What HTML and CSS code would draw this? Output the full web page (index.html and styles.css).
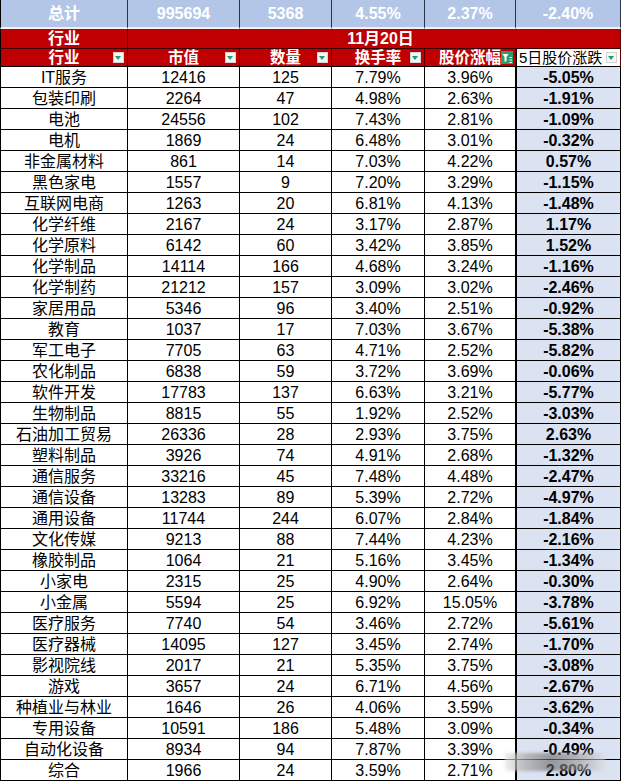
FILE: index.html
```html
<!DOCTYPE html>
<html lang="zh-CN">
<head>
<meta charset="utf-8">
<title>行业 11月20日</title>
<link rel="stylesheet" href="styles.css">
</head>
<body>
<div class="sheet">
  <div class="row total">
    <div class="cell">总计</div><div class="cell">995694</div><div class="cell">5368</div><div class="cell">4.55%</div><div class="cell">2.37%</div><div class="cell">-2.40%</div>
  </div>
  <div class="row head1">
    <div class="cell">行业</div><div class="cell date">11月20日</div>
  </div>
  <div class="row head2">
    <div class="cell">行业<span class="dd"></span></div>
    <div class="cell">市值<span class="dd"></span></div>
    <div class="cell">数量<span class="dd"></span></div>
    <div class="cell">换手率<span class="dd"></span></div>
    <div class="cell">股价涨幅<span class="ddf"><svg width="12" height="13" viewBox="0 0 12 13"><path d="M1.5 3h6L5.5 6v4.5H3.5V6z" fill="#fff"/><path d="M8.5 6.5h2.5M8.5 9h2.5M8.5 11.5h2.5" stroke="#fff" stroke-width="1.2"/></svg></span></div>
    <div class="cell plain">5日股价涨跌<span class="dd"></span></div>
  </div>
  <div class="row"><div class="cell">IT服务</div><div class="cell">12416</div><div class="cell">125</div><div class="cell">7.79%</div><div class="cell">3.96%</div><div class="cell chg">-5.05%</div></div>
  <div class="row"><div class="cell">包装印刷</div><div class="cell">2264</div><div class="cell">47</div><div class="cell">4.98%</div><div class="cell">2.63%</div><div class="cell chg">-1.91%</div></div>
  <div class="row"><div class="cell">电池</div><div class="cell">24556</div><div class="cell">102</div><div class="cell">7.43%</div><div class="cell">2.81%</div><div class="cell chg">-1.09%</div></div>
  <div class="row"><div class="cell">电机</div><div class="cell">1869</div><div class="cell">24</div><div class="cell">6.48%</div><div class="cell">3.01%</div><div class="cell chg">-0.32%</div></div>
  <div class="row"><div class="cell">非金属材料</div><div class="cell">861</div><div class="cell">14</div><div class="cell">7.03%</div><div class="cell">4.22%</div><div class="cell chg">0.57%</div></div>
  <div class="row"><div class="cell">黑色家电</div><div class="cell">1557</div><div class="cell">9</div><div class="cell">7.20%</div><div class="cell">3.29%</div><div class="cell chg">-1.15%</div></div>
  <div class="row"><div class="cell">互联网电商</div><div class="cell">1263</div><div class="cell">20</div><div class="cell">6.81%</div><div class="cell">4.13%</div><div class="cell chg">-1.48%</div></div>
  <div class="row"><div class="cell">化学纤维</div><div class="cell">2167</div><div class="cell">24</div><div class="cell">3.17%</div><div class="cell">2.87%</div><div class="cell chg">1.17%</div></div>
  <div class="row"><div class="cell">化学原料</div><div class="cell">6142</div><div class="cell">60</div><div class="cell">3.42%</div><div class="cell">3.85%</div><div class="cell chg">1.52%</div></div>
  <div class="row"><div class="cell">化学制品</div><div class="cell">14114</div><div class="cell">166</div><div class="cell">4.68%</div><div class="cell">3.24%</div><div class="cell chg">-1.16%</div></div>
  <div class="row"><div class="cell">化学制药</div><div class="cell">21212</div><div class="cell">157</div><div class="cell">3.09%</div><div class="cell">3.02%</div><div class="cell chg">-2.46%</div></div>
  <div class="row"><div class="cell">家居用品</div><div class="cell">5346</div><div class="cell">96</div><div class="cell">3.40%</div><div class="cell">2.51%</div><div class="cell chg">-0.92%</div></div>
  <div class="row"><div class="cell">教育</div><div class="cell">1037</div><div class="cell">17</div><div class="cell">7.03%</div><div class="cell">3.67%</div><div class="cell chg">-5.38%</div></div>
  <div class="row"><div class="cell">军工电子</div><div class="cell">7705</div><div class="cell">63</div><div class="cell">4.71%</div><div class="cell">2.52%</div><div class="cell chg">-5.82%</div></div>
  <div class="row"><div class="cell">农化制品</div><div class="cell">6838</div><div class="cell">59</div><div class="cell">3.72%</div><div class="cell">3.69%</div><div class="cell chg">-0.06%</div></div>
  <div class="row"><div class="cell">软件开发</div><div class="cell">17783</div><div class="cell">137</div><div class="cell">6.63%</div><div class="cell">3.21%</div><div class="cell chg">-5.77%</div></div>
  <div class="row"><div class="cell">生物制品</div><div class="cell">8815</div><div class="cell">55</div><div class="cell">1.92%</div><div class="cell">2.52%</div><div class="cell chg">-3.03%</div></div>
  <div class="row"><div class="cell">石油加工贸易</div><div class="cell">26336</div><div class="cell">28</div><div class="cell">2.93%</div><div class="cell">3.75%</div><div class="cell chg">2.63%</div></div>
  <div class="row"><div class="cell">塑料制品</div><div class="cell">3926</div><div class="cell">74</div><div class="cell">4.91%</div><div class="cell">2.68%</div><div class="cell chg">-1.32%</div></div>
  <div class="row"><div class="cell">通信服务</div><div class="cell">33216</div><div class="cell">45</div><div class="cell">7.48%</div><div class="cell">4.48%</div><div class="cell chg">-2.47%</div></div>
  <div class="row"><div class="cell">通信设备</div><div class="cell">13283</div><div class="cell">89</div><div class="cell">5.39%</div><div class="cell">2.72%</div><div class="cell chg">-4.97%</div></div>
  <div class="row"><div class="cell">通用设备</div><div class="cell">11744</div><div class="cell">244</div><div class="cell">6.07%</div><div class="cell">2.84%</div><div class="cell chg">-1.84%</div></div>
  <div class="row"><div class="cell">文化传媒</div><div class="cell">9213</div><div class="cell">88</div><div class="cell">7.44%</div><div class="cell">4.23%</div><div class="cell chg">-2.16%</div></div>
  <div class="row"><div class="cell">橡胶制品</div><div class="cell">1064</div><div class="cell">21</div><div class="cell">5.16%</div><div class="cell">3.45%</div><div class="cell chg">-1.34%</div></div>
  <div class="row"><div class="cell">小家电</div><div class="cell">2315</div><div class="cell">25</div><div class="cell">4.90%</div><div class="cell">2.64%</div><div class="cell chg">-0.30%</div></div>
  <div class="row"><div class="cell">小金属</div><div class="cell">5594</div><div class="cell">25</div><div class="cell">6.92%</div><div class="cell">15.05%</div><div class="cell chg">-3.78%</div></div>
  <div class="row"><div class="cell">医疗服务</div><div class="cell">7740</div><div class="cell">54</div><div class="cell">3.46%</div><div class="cell">2.72%</div><div class="cell chg">-5.61%</div></div>
  <div class="row"><div class="cell">医疗器械</div><div class="cell">14095</div><div class="cell">127</div><div class="cell">3.45%</div><div class="cell">2.74%</div><div class="cell chg">-1.70%</div></div>
  <div class="row"><div class="cell">影视院线</div><div class="cell">2017</div><div class="cell">21</div><div class="cell">5.35%</div><div class="cell">3.75%</div><div class="cell chg">-3.08%</div></div>
  <div class="row"><div class="cell">游戏</div><div class="cell">3657</div><div class="cell">24</div><div class="cell">6.71%</div><div class="cell">4.56%</div><div class="cell chg">-2.67%</div></div>
  <div class="row"><div class="cell">种植业与林业</div><div class="cell">1646</div><div class="cell">26</div><div class="cell">4.06%</div><div class="cell">3.59%</div><div class="cell chg">-3.62%</div></div>
  <div class="row"><div class="cell">专用设备</div><div class="cell">10591</div><div class="cell">186</div><div class="cell">5.48%</div><div class="cell">3.09%</div><div class="cell chg">-0.34%</div></div>
  <div class="row"><div class="cell">自动化设备</div><div class="cell">8934</div><div class="cell">94</div><div class="cell">7.87%</div><div class="cell">3.39%</div><div class="cell chg">-0.49%</div></div>
  <div class="row"><div class="cell">综合</div><div class="cell">1966</div><div class="cell">24</div><div class="cell">3.59%</div><div class="cell">2.71%</div><div class="cell chg">2.80%</div></div>
  <div class="watermark"></div>
</div>
</body>
</html>
```
FILE: styles.css
```css
html, body {
  margin: 0;
  padding: 0;
  background: #ffffff;
}
.sheet {
  position: relative;
  width: 621px;
  font-family: "Liberation Sans", "Noto Sans CJK SC", sans-serif;
  font-size: 16px;
  line-height: 1;
  color: #000;
}
.row {
  display: grid;
  grid-template-columns: 128px 112px 92px 93px 91px 105px;
  height: 21px;
}
.cell {
  box-sizing: border-box;
  display: flex;
  align-items: center;
  justify-content: center;
  border-right: 1px solid #000;
  border-bottom: 1px solid #000;
  white-space: nowrap;
  overflow: hidden;
  position: relative;
  padding-top: 1px;
}
.cell:first-child {
  border-left: 1px solid #000;
}
.chg {
  background: #dbe2f1;
  font-weight: bold;
  border-left: 1px solid #000;
}
.total {
  height: 29px;
}
.total .cell {
  background: #b4c6e7;
  color: #fff;
  font-weight: bold;
  border-bottom: 2px solid #f2f2f2;
  border-right-color: #2c3448;
  padding-top: 1px;
}
.head1 {
  height: 20px;
}
.head1 .cell {
  background: #c00000;
  color: #fff;
  font-weight: bold;
  border-right-color: #5a0000;
  border-bottom-color: #3a0000;
}
.head1 .date {
  grid-column: 2 / 7;
  padding-left: 13px;
}
.head2 {
  height: 18px;
}
.head2 .cell {
  background: #c00000;
  color: #fff;
  font-weight: bold;
  border-right-color: #5a0000;
  font-size: 15.5px;
  padding-top: 0;
}
.head2 .cell.plain {
  background: #fff;
  color: #000;
  font-weight: normal;
  justify-content: flex-start;
  padding-left: 2px;
  font-size: 15px;
  border-left: 1px solid #000;
}
.dd {
  position: absolute;
  right: 3px;
  top: 3px;
  width: 11px;
  height: 11px;
  box-sizing: border-box;
  background: #f6f6f6;
  border: 1px solid #d4d4d4;
}
.dd::after {
  content: "";
  position: absolute;
  left: 1px;
  top: 3px;
  border-left: 3.5px solid transparent;
  border-right: 3.5px solid transparent;
  border-top: 4px solid #17a06a;
}
.ddf {
  position: absolute;
  right: 2px;
  top: 2px;
  width: 12px;
  height: 13px;
  background: #2c9c6c;
  display: block;
}
.ddf svg {
  display: block;
}
.watermark {
  position: absolute;
  left: 505px;
  top: 753px;
  width: 100px;
  height: 18px;
  background: linear-gradient(90deg, rgba(230,230,230,0.6) 0%, rgba(170,170,170,0.7) 20%, rgba(100,100,100,0.6) 45%, rgba(150,150,150,0.65) 70%, rgba(220,220,220,0.5) 100%);
  filter: blur(1.5px);
}
```
